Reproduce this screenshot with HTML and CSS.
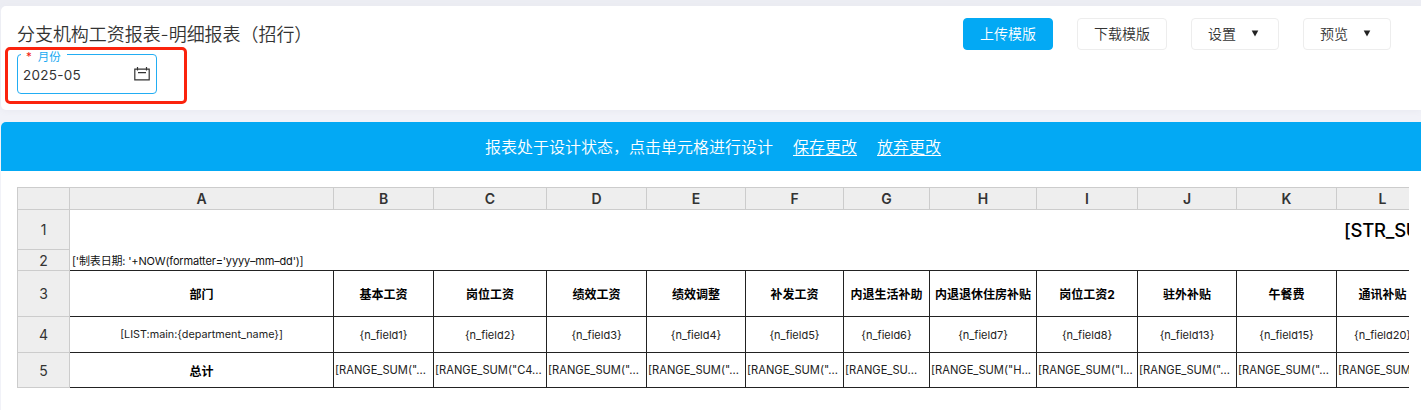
FILE: index.html
```html
<!DOCTYPE html>
<html lang="zh-CN">
<head>
<meta charset="utf-8">
<title>分支机构工资报表</title>
<link rel="stylesheet" href="styles.css">
</head>
<body>
<header class="panel">
  <div class="heading">
    <h1 class="title">分支机构工资报表-明细报表（招行）</h1>
    <div class="highlight">
      <div class="field">
        <div class="legend"><span class="star">*</span>月份</div>
        <span class="value">2025-05</span>
        <svg class="calendar" width="16" height="14" viewBox="0 0 16 14" fill="none" stroke="#333" stroke-width="1.2"><path d="M.8 2.2H15.2V12.8H.8ZM3.5 0V3.6M12.5 0V3.6M4 5.7H12"/></svg>
      </div>
    </div>
  </div>
  <div class="actions">
    <button class="btn primary">上传模版</button>
    <button class="btn">下载模版</button>
    <button class="btn menu">设置<svg width="8" height="7" viewBox="0 0 8 7"><path d="M.7.5H7.3L4 6.5Z" fill="#222"/></svg></button>
    <button class="btn menu">预览<svg width="8" height="7" viewBox="0 0 8 7"><path d="M.7.5H7.3L4 6.5Z" fill="#222"/></svg></button>
  </div>
</header>
<main class="report">
  <div class="notice"><span>报表处于设计状态，点击单元格进行设计</span><a>保存更改</a><a>放弃更改</a></div>
  <div class="viewport">
    <div class="sheet">
      <div class="h"></div><div class="h">A</div><div class="h">B</div><div class="h">C</div><div class="h">D</div><div class="h">E</div><div class="h">F</div><div class="h">G</div><div class="h">H</div><div class="h">I</div><div class="h">J</div><div class="h">K</div><div class="h">L</div>
      <div class="n">1</div><div class="wide banner">[STR_SU</div>
      <div class="n">2</div><div class="wide date">['制表日期: '+NOW(formatter='yyyy–mm–dd')]</div>
      <div class="n">3</div><div class="c b">部门</div><div class="c b">基本工资</div><div class="c b">岗位工资</div><div class="c b">绩效工资</div><div class="c b">绩效调整</div><div class="c b">补发工资</div><div class="c b">内退生活补助</div><div class="c b">内退退休住房补贴</div><div class="c b">岗位工资2</div><div class="c b">驻外补贴</div><div class="c b">午餐费</div><div class="c b">通讯补贴</div>
      <div class="n">4</div><div class="c list">[LIST:main:{department_name}]</div><div class="c">{n_field1}</div><div class="c">{n_field2}</div><div class="c">{n_field3}</div><div class="c">{n_field4}</div><div class="c">{n_field5}</div><div class="c">{n_field6}</div><div class="c">{n_field7}</div><div class="c">{n_field8}</div><div class="c">{n_field13}</div><div class="c">{n_field15}</div><div class="c">{n_field20}</div>
      <div class="n">5</div><div class="c b">总计</div><div class="c s">[RANGE_SUM("...</div><div class="c s">[RANGE_SUM("C4...</div><div class="c s">[RANGE_SUM("...</div><div class="c s">[RANGE_SUM("...</div><div class="c s">[RANGE_SUM("...</div><div class="c s">[RANGE_SU...</div><div class="c s">[RANGE_SUM("H...</div><div class="c s">[RANGE_SUM("I...</div><div class="c s">[RANGE_SUM("...</div><div class="c s">[RANGE_SUM("...</div><div class="c s">[RANGE_SUM("...</div>
    </div>
  </div>
</main>
</body>
</html>
```
FILE: styles.css
```css
* { box-sizing: border-box; }
body {
  margin: 0;
  height: 410px;
  padding: 6px 0 0 1px;
  overflow: hidden;
  background: linear-gradient(#ecedf3 0, #ecedf3 6px, #f1f2f8 12px);
  font-family: Inter, "Noto Sans CJK SC", sans-serif;
  color: #333;
}
.panel {
  display: flex;
  justify-content: space-between;
  height: 104px;
  padding: 12px 30px 0 4px;
  background: #fff;
  border-radius: 5px 0 0 5px;
  box-shadow: 0 1px 6px #e8e9f0;
}
.title {
  margin: 0 0 0 12px;
  height: 29px;
  font-size: 18px;
  font-weight: 350;
  line-height: 33px;
  letter-spacing: -.05px;
  white-space: nowrap;
}
.highlight {
  width: 182px;
  height: 57px;
  padding: 4px 0 0 9px;
  border: 3px solid #fb230d;
  border-radius: 5px;
}
.field {
  display: flex;
  justify-content: space-between;
  width: 140px;
  height: 40px;
  padding: 0 6px 0 5px;
  border: 1px solid #22adf3;
  border-radius: 4px;
  position: relative;
}
.legend {
  position: absolute;
  left: 3px;
  top: -4px;
  width: 46px;
  padding-left: 5px;
  background: #fff;
  color: #18aaf2;
  font-size: 11.5px;
  line-height: 12px;
  white-space: nowrap;
}
.star { color: #f31b10; margin-right: 6px; }
.value { font-size: 13.5px; line-height: 41px; letter-spacing: .25px; }
.calendar { margin-top: 12px; }
.actions { display: flex; gap: 24px; }
.btn {
  display: flex;
  align-items: center;
  justify-content: center;
  width: 90px;
  height: 32px;
  padding: 0;
  border: 1px solid #ededed;
  border-radius: 4px;
  background: #fff;
  color: #333;
  font: 350 14px/30px Inter, "Noto Sans CJK SC", sans-serif;
}
.primary { border-color: #03a9f4; background: #03a9f4; color: #fff; }
.menu { width: 88px; gap: 15px; padding-right: 3px; }
.menu svg { margin: -2px 0 0; }
.report {
  height: 288px;
  margin-top: 12px;
  background: #fff;
  border-radius: 5px 0 0 0;
  overflow: hidden;
}
.notice {
  display: flex;
  gap: 20px;
  height: 49px;
  padding-left: 484px;
  background: #03a9f4;
  color: #fff;
  font-size: 16px;
  font-weight: 350;
  line-height: 50px;
}
.notice a { text-decoration: underline; text-underline-offset: 2px; text-decoration-thickness: 1px; }
.viewport { margin: 16px 12px 0 16px; overflow: hidden; }
.sheet {
  display: grid;
  grid-template-columns: 52px 264px 100px 113px 100px 99px 98px 86px 107px 101px 99px 100px 92px;
  grid-template-rows: 22px 40px 21px 46px 36px 35px;
  width: 1412px;
  border-top: 1px solid #ccc;
  border-left: 1px solid #ccc;
}
.sheet > div {
  display: flex;
  align-items: center;
  justify-content: center;
  overflow: hidden;
  white-space: nowrap;
}
.h, .n {
  border-right: 1px solid #ccc;
  border-bottom: 1px solid #ccc;
  background: #eee;
  font-size: 14px;
}
.h { font-weight: 600; }
.c {
  border-right: 1px solid #222;
  border-bottom: 1px solid #222;
  color: #222;
  font-size: 11px;
}
.list { font-size: 10.8px; }
.b { color: #000; font-size: 12px; font-weight: 700; }
.sheet > .s { justify-content: flex-start; padding-left: 1px; font-size: 11.15px; }
.sheet > .wide { grid-column: 2 / -1; justify-content: flex-start; }
.banner { padding-left: 1274px; color: #000; font-size: 18.5px; font-weight: 500; letter-spacing: -.25px; }
.date { padding-left: 2px; border-bottom: 1px solid #222; color: #111; font-size: 11px; letter-spacing: -.17px; }
```
